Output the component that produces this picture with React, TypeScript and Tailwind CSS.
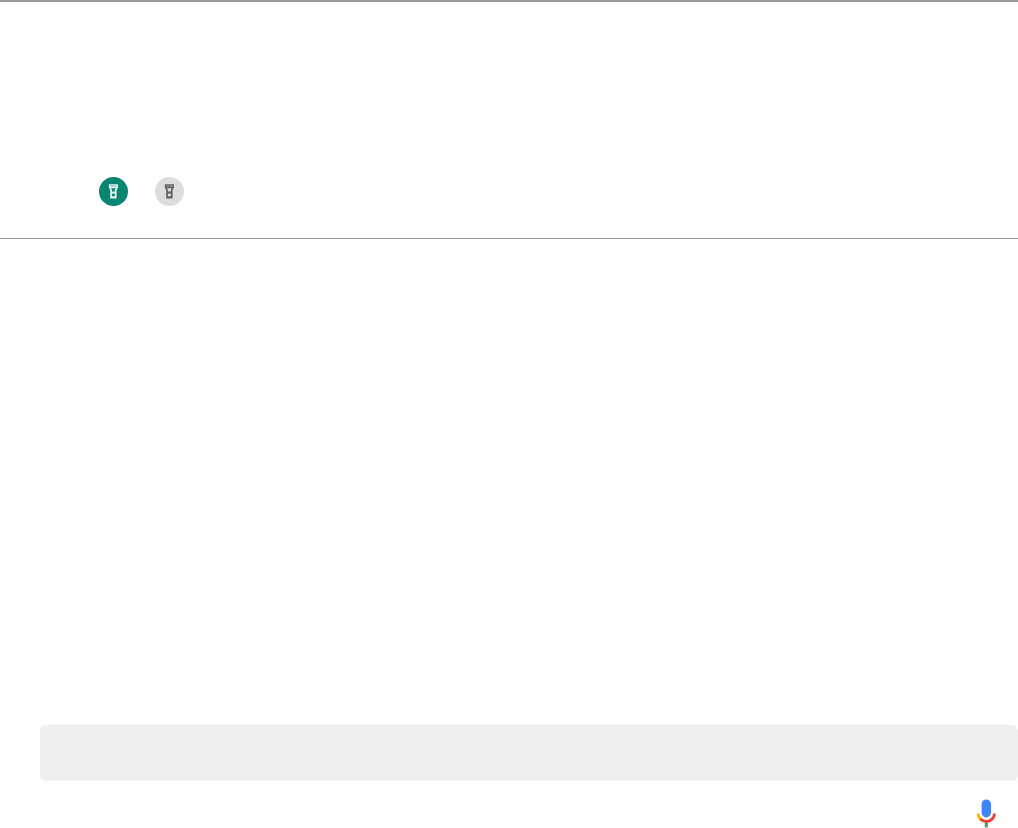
function Flashlight() {
  return (
    <svg viewBox="0 0 29 29" className="size-full" fill="currentColor" aria-hidden="true">
      <path
        fillRule="evenodd"
        d="M9.8 7.2h9.2v3.4L17.6 13v8.6h-6.4V13L9.8 10.6zM11 8.7v.6h6.8v-.6zM12 11.2l1 1.9v1.3h2.8v-1.3l1-1.9zM14.4 16.2a1.6 1.6 0 1 0 0 3.2 1.6 1.6 0 0 0 0-3.2z"
      />
    </svg>
  );
}

function Microphone() {
  return (
    <svg viewBox="0 0 20 29" className="h-[29px] w-5" fill="none" aria-hidden="true">
      <rect x="5.6" y="0.4" width="9.4" height="18" rx="4.6" fill="#4285f4" />
      <path d="M10.3 22v6.4" stroke="#34a853" strokeWidth="3" />
      <path d="M2.2 14.4c0 2.6 1 4.8 2.8 6.2" stroke="#fbbc05" strokeWidth="3" />
      <path d="M4.4 20C5.9 21.6 7.9 22.5 10.3 22.5c4.7 0 8.1-3.6 8.1-8.1" stroke="#ea4335" strokeWidth="3" />
    </svg>
  );
}

export default function App() {
  return (
    <main className="flex min-h-screen flex-col bg-white">
      <hr className="h-[2px] border-0 bg-[#999999]" />
      <section className="flex gap-[27px] pt-[175px] pb-8 pl-[99px]">
        <button type="button" aria-label="Flashlight on" className="size-[29px] rounded-full bg-[#098573] text-[#e5f2ef]">
          <Flashlight />
        </button>
        <button type="button" aria-label="Flashlight off" className="size-[29px] rounded-full bg-[#dddddd] text-[#626262]">
          <Flashlight />
        </button>
      </section>
      <hr className="h-px border-0 bg-[#999999]" />
      <section className="flex flex-1 flex-col justify-end gap-[18px] pt-10">
        <div className="ml-10 h-14 rounded-md bg-[#eeeeee]" />
        <div className="flex justify-end pr-[22px]">
          <button type="button" aria-label="Voice search">
            <Microphone />
          </button>
        </div>
      </section>
    </main>
  );
}
